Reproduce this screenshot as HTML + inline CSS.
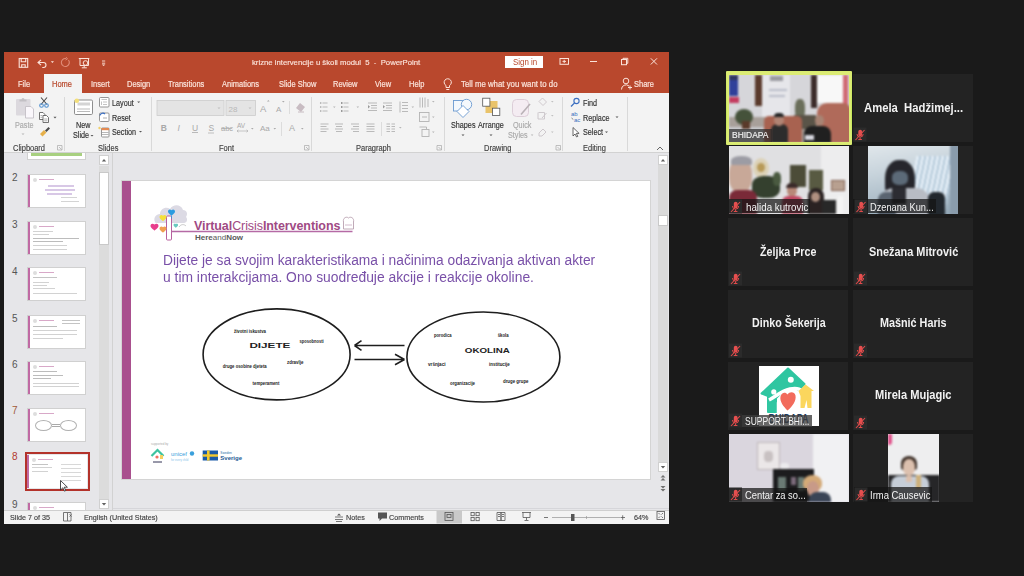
<!DOCTYPE html>
<html><head><meta charset="utf-8">
<style>
*{margin:0;padding:0;box-sizing:border-box}
html,body{width:1024px;height:576px;overflow:hidden;background:#1a1a1a;font-family:"Liberation Sans",sans-serif}
.a{position:absolute}
.t{position:absolute;white-space:nowrap;line-height:1;transform-origin:0 0}
.tab{position:absolute;white-space:nowrap;line-height:1;color:#fbe3da;font-size:8.5px;top:79.7px;transform:scaleX(.88);-webkit-text-stroke:0.2px #fbe3da;transform-origin:0 0}
.rb{position:absolute;white-space:nowrap;line-height:1;color:#303030;font-size:8.5px;transform:scaleX(.85);transform-origin:0 0;-webkit-text-stroke:0.15px currentColor}
.dis{color:#a9a9a9}
.grp{position:absolute;white-space:nowrap;line-height:1;color:#404040;font-size:8.5px;top:144px;transform:scaleX(.88);transform-origin:0 0;-webkit-text-stroke:0.15px #404040}
.sep{position:absolute;width:1px;background:#d9d9d9;top:97px;height:54px}
.st{position:absolute;white-space:nowrap;line-height:1;color:#404040;font-size:8px;top:514px;transform:scaleX(.9);transform-origin:0 0;-webkit-text-stroke:0.15px #404040}
.tile{position:absolute;width:120px;height:68px;background:#232323;overflow:hidden}
.nm{position:absolute;color:#f2f2f2;font-weight:bold;font-size:12px;white-space:nowrap;line-height:1;transform:scaleX(.91);transform-origin:0 0}
.ov{position:absolute;background:rgba(20,20,20,.72);height:14px}
.vn{position:absolute;color:#f4f4f4;font-size:10.5px;white-space:nowrap;line-height:1;transform-origin:0 0}
.mic{position:absolute;width:13px;height:14px;background:rgba(40,40,40,.9)}
svg{position:absolute;overflow:visible}
.th{position:absolute;left:27px;width:59px;height:34px;background:#fff;border:1px solid #d0d0d0;overflow:hidden}
.th:before{content:"";position:absolute;left:0;top:0;width:1.5px;height:100%;background:#c06aa4}
.tn{position:absolute;left:12px;font-size:10px;color:#555;line-height:1}
</style></head><body>
<!-- ===== PPT window ===== -->
<div class="a" style="left:4px;top:52px;width:665px;height:472px;background:#e6e6e9"></div>
<div class="a" style="left:113px;top:507.5px;width:556px;height:1px;background:#d6d6da"></div>
<div class="a" style="left:4px;top:52px;width:665px;height:41px;background:#b9482d"></div>
<div class="a" style="left:44px;top:74px;width:38px;height:19px;background:#f3f3f3"></div>
<div class="a" style="left:4px;top:93px;width:665px;height:60px;background:#f3f3f3;border-bottom:1px solid #d2d2d2"></div>
<div class="a" style="left:4px;top:510px;width:665px;height:14px;background:#f3f3f3;border-top:1px solid #cfcfcf"></div>

<!-- quick access icons -->
<svg style="left:0;top:0" width="1" height="1">
  <g fill="none" stroke="#fbe3da" stroke-width="1.1">
    <rect x="19.2" y="58.5" width="8.5" height="8.8"/>
    <path d="M21.2 58.5v3.2h4.5v-3.2M21.7 67.3v-2.6h3.5v2.6"/>
    <path d="M41 59.8l-3 2.7 3 2.7M38 62.5h5.5a2.5 2.5 0 0 1 0 5h-1.2"/>
  </g>
  <path d="M50.8 61.2h3.2l-1.6 1.8z" fill="#fbe3da"/>
  <path d="M68.5 60a4 4 0 1 1-2.5-1.5" fill="none" stroke="#e08c78" stroke-width="1.1"/>
  <path d="M66 57l1.5 2-2 1" fill="none" stroke="#e08c78" stroke-width="0.9"/>
  <g fill="none" stroke="#fbe3da" stroke-width="1">
    <path d="M78.8 58.5h10.5M80 58.5v7h8.5v-7M84.2 65.5v2M81.8 67.8h5"/>
    <circle cx="85.5" cy="63" r="2.3"/>
  </g>
  <path d="M102 61h3.2M102 63.2h3.2" stroke="#fbe3da" stroke-width="0.9"/>
  <path d="M101.8 64.5l1.8 1.6 1.8-1.6z" fill="#fbe3da"/>
</svg>
<!-- title text -->
<div class="t" id="ttl" style="left:252px;top:59px;font-size:8px;color:#fbe3da;transform:scaleX(.965);-webkit-text-stroke:0.15px #fbe3da">krizne intervencije u školi modul&nbsp; 5&nbsp; -&nbsp; PowerPoint</div>
<div class="a" style="left:505px;top:56px;width:38px;height:12px;background:#fff"></div>
<div class="t" id="signin" style="left:512.5px;top:58px;font-size:8.5px;color:#b8472a;transform:scaleX(.93)">Sign in</div>
<svg style="left:0;top:0" width="1" height="1">
  <g fill="none" stroke="#fbe3da" stroke-width="1">
    <rect x="560" y="58.5" width="8.5" height="5.8"/>
    <path d="M562.5 61.4h3.5M564.2 59.8v3.2"/>
    <path d="M590 61.5h7"/>
    <rect x="621.5" y="59.5" width="5" height="5.2"/>
    <path d="M623 59.5v-1.2h4.8v5H626.5"/>
    <path d="M650.8 58.3l6.2 6.2M657 58.3l-6.2 6.2"/>
  </g>
</svg>
<!-- tabs -->
<div class="tab" id="tFile" style="left:18px">File</div>
<div class="tab" id="tHome" style="left:52px;color:#b8472a;-webkit-text-stroke-color:#b8472a">Home</div>
<div class="tab" id="tIns" style="left:91px">Insert</div>
<div class="tab" id="tDes" style="left:127px">Design</div>
<div class="tab" id="tTra" style="left:168px">Transitions</div>
<div class="tab" id="tAni" style="left:222px">Animations</div>
<div class="tab" id="tSS" style="left:279px">Slide Show</div>
<div class="tab" id="tRev" style="left:333px">Review</div>
<div class="tab" id="tVie" style="left:375px">View</div>
<div class="tab" id="tHel" style="left:409px">Help</div>
<div class="tab" id="tTell" style="left:461px;transform:scaleX(.92)">Tell me what you want to do</div>
<div class="tab" id="tSha" style="left:634px">Share</div>
<svg style="left:0;top:0" width="1" height="1">
  <g fill="none" stroke="#fbe3da" stroke-width="1">
    <path d="M446 87.5v-2a3.6 3.6 0 1 1 3.5 0v2zM446.3 89.5h3"/>
    <circle cx="626" cy="81" r="2.8"/>
    <path d="M621.5 89.5a4.5 4.5 0 0 1 7.5-3.5M630 85.5v4M628 87.5h4"/>
  </g>
</svg>
<!-- ribbon group labels -->
<div class="grp" id="gClip" style="left:13px">Clipboard</div>
<div class="grp" id="gSli" style="left:98px">Slides</div>
<div class="grp" id="gFon" style="left:219px">Font</div>
<div class="grp" id="gPar" style="left:356px">Paragraph</div>
<div class="grp" id="gDra" style="left:484px">Drawing</div>
<div class="grp" id="gEdi" style="left:583px">Editing</div>
<div class="sep" style="left:64px"></div>
<div class="sep" style="left:151px"></div>
<div class="sep" style="left:311px"></div>
<div class="sep" style="left:444px"></div>
<div class="sep" style="left:562px"></div>
<div class="sep" style="left:627px"></div>
<!-- ribbon labels -->
<div class="rb dis" id="rPaste" style="left:15px;top:121px">Paste</div>
<div class="rb" id="rNew" style="left:76px;top:121px">New</div>
<div class="rb" id="rSlide" style="left:73px;top:131px">Slide</div>
<div class="rb" id="rLay" style="left:112px;top:99px">Layout</div>
<div class="rb" id="rRes" style="left:112px;top:114px">Reset</div>
<div class="rb" id="rSec" style="left:112px;top:128px">Section</div>
<div class="rb" id="rSha" style="left:451px;top:121px">Shapes</div>
<div class="rb" id="rArr" style="left:478px;top:121px">Arrange</div>
<div class="rb dis" id="rQui" style="left:513px;top:121px">Quick</div>
<div class="rb dis" id="rSty" style="left:508px;top:131px">Styles</div>
<div class="rb" id="rFin" style="left:583px;top:99px">Find</div>
<div class="rb" id="rRep" style="left:583px;top:114px">Replace</div>
<div class="rb" id="rSel" style="left:583px;top:128px">Select</div>
<svg style="left:0;top:0" width="1" height="1">
 <!-- Clipboard -->
 <rect x="16" y="99" width="14.5" height="16.5" rx="1" fill="#dcd9de"/>
 <path d="M19.5 101.5h7v-2h-2a1.5 1.5 0 0 0-3 0h-2z" fill="#c2c0c4"/>
 <path d="M25.5 106.5h5.5l2.5 2.5v9h-8z" fill="#faf7fb" stroke="#c4c0c6" stroke-width="0.9"/>
 <path d="M21.5 133.5h3l-1.5 1.6z" fill="#b5b5b5"/>
 <g stroke="#4a4a4a" stroke-width="1.1" fill="none"><path d="M41 97.5l6 7M47 97.5l-6 7"/></g>
 <g stroke="#4f8fd0" stroke-width="1.1" fill="none"><circle cx="41.5" cy="105.5" r="1.8"/><circle cx="46.5" cy="105.5" r="1.8"/></g>
 <g stroke="#505050" stroke-width="0.8" fill="#fff"><path d="M39.5 112.5h3.5l1.8 1.8v5.2h-5.3z"/><path d="M43 115.5h3.5l2 2v5h-5.5z"/></g><path d="M44.2 119h3.2M44.2 120.8h3.2M40.5 115.5h2M40.5 117.3h2" stroke="#808080" stroke-width="0.6"/>
 <path d="M53.5 116.8h3l-1.5 1.6z" fill="#555"/>
 <path d="M40 134l4-4 2.5 2.5-4 4z" fill="#e6b04a"/>
 <path d="M45 130.5l3.5-3.5 1.5 1.5-3.5 3.5z" fill="#4a4a4a"/>
 <!-- Slides -->
 <rect x="74.5" y="100" width="18" height="14.5" rx="1.2" fill="#fff" stroke="#8e8e8e" stroke-width="1"/>
 <rect x="77.5" y="102.5" width="12.5" height="3" fill="#d4d4d4"/>
 <path d="M77 109h13M77 111.5h13" stroke="#a9a9a9" stroke-width="0.8"/>
 <circle cx="76.8" cy="100.7" r="2.3" fill="#f3df7a"/>
 <path d="M90.5 135h3l-1.5 1.6z" fill="#555"/>
 <rect x="99.5" y="97.5" width="9.5" height="9.5" rx="1" fill="#fff" stroke="#8a8a8a" stroke-width="0.9"/>
 <path d="M101.5 99.5h5.5M101.5 101.5v3.5M103 102h4M103 104.5h4" stroke="#aaa" stroke-width="0.7"/>
 <path d="M137.2 101.5h3l-1.5 1.6z" fill="#555"/>
 <rect x="99.5" y="113" width="9.5" height="8.5" rx="1" fill="#fff" stroke="#8a8a8a" stroke-width="0.9"/>
 <path d="M100 115.5a3 3 0 0 1 5-1.5" stroke="#3a6fc4" stroke-width="1.1" fill="none"/>
 <path d="M103 118h4" stroke="#999" stroke-width="0.8"/>
 <rect x="101.5" y="128" width="7.5" height="9" rx="0.8" fill="#fff" stroke="#8a8a8a" stroke-width="0.9"/>
 <rect x="101.5" y="128" width="7.5" height="2.2" fill="#e48a52"/>
 <path d="M102 132.5h6.5M102 134.5h6.5" stroke="#999" stroke-width="0.7"/>
 <circle cx="99.5" cy="128" r="1.2" fill="#f1d06a"/>
 <path d="M139 131h3l-1.5 1.6z" fill="#555"/>
 <!-- launchers -->
 <g stroke="#a8a8a8" stroke-width="0.7" fill="none">
  <path d="M57.5 145.5h4.5v4.5h-4.5zM59 147l2.5 2.5"/>
  <path d="M304.5 145.5h4.5v4.5h-4.5zM306 147l2.5 2.5"/>
  <path d="M437 145.5h4.5v4.5H437zM438.5 147l2.5 2.5"/>
  <path d="M556 145.5h4.5v4.5H556zM557.5 147l2.5 2.5"/>
 </g>
 <path d="M657 150l3-3 3 3" stroke="#555" stroke-width="0.9" fill="none"/>
 <!-- Font group -->
 <rect x="157" y="100.5" width="67" height="15" fill="#e4e4e4" stroke="#cdcdcd" stroke-width="0.8"/>
 <rect x="226" y="100.5" width="29.5" height="15" fill="#e4e4e4" stroke="#cdcdcd" stroke-width="0.8"/>
 <path d="M217.5 107.5h3l-1.5 1.6zM248.5 107.5h3l-1.5 1.6z" fill="#bdbdbd"/>
 <text x="228.5" y="111.5" font-size="8" fill="#b9b9b9" font-family="Liberation Sans">28</text>
 <g fill="#a9a9a9" font-family="Liberation Sans">
  <text x="260" y="112" font-size="9.5">A</text><path d="M267 101.5l1.3-1.5 1.3 1.5z"/>
  <text x="276" y="112" font-size="8">A</text><path d="M282 101l1.3 1.5 1.3-1.5z"/>
 </g>
 <path d="M289.5 101v13" stroke="#d6d6d6" stroke-width="0.8"/>
 <path d="M296 108l4-5 5 4-4 5z" fill="#c8bcc2"/>
 <path d="M298 112h6" stroke="#c8bcc2" stroke-width="1"/>
 <g fill="#a9a9a9" font-family="Liberation Sans" font-size="8.5">
  <text x="160.8" y="131" font-weight="bold">B</text>
  <text x="177.5" y="131" font-style="italic">I</text>
  <text x="192" y="130.5">U</text><path d="M192 132.5h6" stroke="#a9a9a9" stroke-width="0.8"/>
  <text x="208.5" y="131">S</text><path d="M208 133h6" stroke="#a9a9a9" stroke-width="0.7"/>
  <text x="221" y="131" font-size="7.5">abc</text><path d="M221 128.5h11" stroke="#a9a9a9" stroke-width="0.7"/>
  <text x="237" y="128" font-size="6.5">AV</text><path d="M237 131h11M237 131l1.5-1.2M237 131l1.5 1.2M248 131l-1.5-1.2M248 131l-1.5 1.2" stroke="#a9a9a9" stroke-width="0.6"/>
  <text x="260" y="131" font-size="8">Aa</text>
  <text x="289" y="131" font-size="9">A</text>
  <path d="M251 128h2.6l-1.3 1.4zM273.5 128h2.6l-1.3 1.4zM301 128h2.6l-1.3 1.4z"/>
 </g>
 <path d="M281.5 122v14" stroke="#d6d6d6" stroke-width="0.8"/>
 <!-- Paragraph -->
 <g stroke="#b3b3b3" stroke-width="0.9" fill="none">
  <path d="M322.5 103h5M322.5 107h5M322.5 111h5M343.5 103h5M343.5 107h5M343.5 111h5"/>
  <path d="M368 103h9M371 105.5h6M371 108h6M368 110.5h9M383 103h9M386 105.5h6M386 108h6M383 110.5h9"/>
  <path d="M402 102.5h6M402 105.5h6M402 108.5h6M402 111.5h6M400 101.5v11"/>
  <path d="M420 97.5v10M422.5 97.5v10M425 97.5v10M428 99v8"/>
  <rect x="419.5" y="112.5" width="9.5" height="9"/><path d="M422 117h5"/>
  <rect x="422" y="129.5" width="7" height="7"/><path d="M419.5 127h7v2"/>
  <path d="M320.5 124h8M320.5 126.5h6M320.5 129h8M320.5 131.5h6"/>
  <path d="M335 124h8M336 126.5h6M335 129h8M336 131.5h6"/>
  <path d="M351 124h8M353 126.5h6M351 129h8M353 131.5h6"/>
  <path d="M366.5 124h8M366.5 126.5h8M366.5 129h8M366.5 131.5h8"/>
  <path d="M386.5 124h3.5M391.5 124h3.5M386.5 126.5h3.5M391.5 126.5h3.5M386.5 129h3.5M391.5 129h3.5M386.5 131.5h3.5M391.5 131.5h3.5"/>
 </g>
 <g fill="#9a9a9a">
  <circle cx="320.7" cy="103" r="0.8"/><circle cx="320.7" cy="107" r="0.8"/><circle cx="320.7" cy="111" r="0.8"/>
  <path d="M341 102h1.5v2H341zM341 106h1.5v2H341zM341 110h1.5v2H341z"/>
  <path d="M368 105l2 1.8-2 1.8z M383 105l2 1.8-2 1.8z"/>
 </g>
 <path d="M381.5 122v14" stroke="#d6d6d6" stroke-width="0.8"/>
 <g fill="#b5b5b5"><path d="M333 106.5h2.6l-1.3 1.4zM356.5 106.5h2.6l-1.3 1.4zM411.5 106.5h2.6l-1.3 1.4zM432 101h2.6l-1.3 1.4zM432 116.5h2.6l-1.3 1.4zM432 131.5h2.6l-1.3 1.4zM399 127h2.6l-1.3 1.4z"/></g>
 <!-- Drawing -->
 <rect x="453.5" y="100.5" width="10.5" height="10.5" fill="#f4f8fc" stroke="#6a9ad0" stroke-width="0.9"/>
 <circle cx="466.5" cy="104.5" r="5.2" fill="#f4f8fc" stroke="#6a9ad0" stroke-width="0.9"/>
 <path d="M463 105.5l6 6-6 6-6-6z" fill="#fff" stroke="#6a9ad0" stroke-width="0.9"/>
 <rect x="485.5" y="101" width="12" height="12" fill="#e9c36a"/>
 <rect x="482.7" y="98.2" width="7.2" height="8" fill="#fff" stroke="#555" stroke-width="0.8"/>
 <rect x="492.5" y="108.2" width="7.3" height="7.3" fill="#fff" stroke="#555" stroke-width="0.8"/>
 <path d="M461.5 134.5h3l-1.5 1.6zM489.5 134.5h3l-1.5 1.6z" fill="#555"/>
 <rect x="512.5" y="99.5" width="16" height="17" rx="4" fill="#f4ecf2" stroke="#d9cad5" stroke-width="0.9"/>
 <path d="M530 104l-9 10.5" stroke="#b9b1b6" stroke-width="1.6"/>
 <path d="M530.8 134.5h2.6l-1.3 1.4z" fill="#b5b5b5"/>
 <g stroke="#c9c4c8" stroke-width="0.9" fill="none">
  <path d="M539 101.5l3.5-3.5 4 4-3.5 3.5z"/>
  <path d="M538.5 112.5h6v6.5h-6.5v-6.5M542 118l4.5-5"/>
  <path d="M539 133l4-4 3 3-4 4h-3z"/>
 </g>
 <path d="M551 101h2.6l-1.3 1.4zM551 115h2.6l-1.3 1.4zM551 131.5h2.6l-1.3 1.4z" fill="#c0c0c0"/>
 <!-- Editing -->
 <circle cx="576.5" cy="101" r="2.6" fill="none" stroke="#3a6ec0" stroke-width="1.1"/>
 <path d="M574.6 102.9l-3.6 3.6" stroke="#3a6ec0" stroke-width="1.3"/>
 <text x="571" y="115.5" font-size="6" fill="#3a6ec0" font-family="Liberation Sans">ab</text>
 <text x="574" y="121.5" font-size="6" fill="#3a6ec0" font-family="Liberation Sans">ac</text>
 <path d="M571.5 118l1.8 1.5" stroke="#555" stroke-width="0.7"/>
 <path d="M615.5 116.5h3l-1.5 1.6z" fill="#555"/>
 <path d="M573 127.5v8.5l2-2 1.6 3 1.2-.6-1.5-3h2.8z" fill="#fff" stroke="#444" stroke-width="0.8"/>
 <path d="M605 131.5h3l-1.5 1.6z" fill="#555"/>
</svg>

<!-- ===== status bar ===== -->
<div class="st" id="sSl" style="left:10px">Slide 7 of 35</div>
<div class="st" id="sEn" style="left:84px">English (United States)</div>
<div class="st" id="sNo" style="left:346px">Notes</div>
<div class="st" id="sCo" style="left:389px">Comments</div>
<div class="st" id="sPc" style="left:634px">64%</div>
<svg style="left:0;top:0" width="1" height="1">
 <g stroke="#555" stroke-width="0.8" fill="none">
  <path d="M63.5 512.5h4v8.5h-4zM67.5 512.5h3.5v8.5h-3.5"/>
  <path d="M69.5 514.5l2 2M71.5 514.5l-2 2"/>
 </g>
 <g stroke="#555" stroke-width="0.8" fill="none"><path d="M335 517h8M335 519.5h8M336 521.5h6"/></g>
 <path d="M337 515.5l2-2 2 2z" fill="#555"/>
 <path d="M378 512.5h9v6h-5l-2.5 2.5v-2.5H378z" fill="#555"/>
 <rect x="436.5" y="510.5" width="25.5" height="13" fill="#c9c9c9"/>
 <g stroke="#555" stroke-width="0.8" fill="none">
  <rect x="445" y="512.5" width="8" height="8"/><rect x="447" y="514.5" width="4" height="3"/>
  <rect x="471" y="512.5" width="3.2" height="3.2"/><rect x="476" y="512.5" width="3.2" height="3.2"/>
  <rect x="471" y="517.5" width="3.2" height="3.2"/><rect x="476" y="517.5" width="3.2" height="3.2"/>
  <path d="M497 512.5h4v8h-4zM501 512.5h4v8h-4z"/>
  <path d="M498 514.5h2M498 516.5h2M502 514.5h2M502 516.5h2"/>
  <path d="M522 512.5h9M523 512.5v5h7v-5M526.5 517.5v2.5M524.5 520.5h4"/>
  <path d="M544 517.5h4M620.5 517.5h4.5M622.7 515.3v4.5"/>
  <rect x="657" y="511.5" width="7.5" height="8"/>
  <path d="M658.5 513l1.5 1.5M663 513l-1.5 1.5M658.5 518l1.5-1.5M663 518l-1.5-1.5"/>
 </g>
 <path d="M552 517.5h68" stroke="#a8a8a8" stroke-width="0.9"/>
 <rect x="571" y="514" width="3.5" height="7" fill="#555"/>
 <path d="M586.5 516v3" stroke="#999" stroke-width="0.7"/>
</svg>

<!-- thumbnail pane -->
<div class="a" style="left:112px;top:153px;width:1px;height:357px;background:#d2d2d2"></div>
<div class="a" style="left:99px;top:155px;width:10px;height:10px;background:#fff;border:1px solid #d0d0d0"></div>
<svg style="left:0;top:0" width="1" height="1"><path d="M101.8 161.5l2.2-2.4 2.2 2.4z" fill="#606060"/><path d="M101.8 503l2.2 2.4 2.2-2.4z" fill="#606060"/></svg>
<div class="a" style="left:99px;top:166px;width:10px;height:334px;background:#dcdcdc"></div>
<div class="a" style="left:99px;top:172px;width:10px;height:73px;background:#fff;border:1px solid #c9c9c9"></div>
<div class="a" style="left:99px;top:499px;width:10px;height:10px;background:#fff;border:1px solid #d0d0d0"></div>
<svg style="left:0;top:0" width="1" height="1"><path d="M101.8 503l2.2 2.4 2.2-2.4z" fill="#606060"/></svg>
<!-- thumb 1 bottom -->
<div class="a" style="left:27px;top:153px;width:59px;height:7px;background:#fff;border:1px solid #d0d0d0;border-top:none"></div>
<div class="a" style="left:31px;top:153px;width:51px;height:3px;background:#a8d080"></div>
<!-- thumbs -->
<div class="tn" style="top:173px">2</div>
<div class="th" style="top:174px">
 <div class="a" style="left:5px;top:3px;width:4px;height:4px;border-radius:50%;background:#ddd"></div>
 <div class="a" style="left:11px;top:4px;width:15px;height:1px;background:#d8a8c8"></div>
 <div class="a" style="left:20px;top:10px;width:26px;height:1.5px;background:#d8c8e6"></div>
 <div class="a" style="left:17px;top:14px;width:30px;height:1.5px;background:#d8c8e6"></div>
 <div class="a" style="left:19px;top:18px;width:25px;height:1.5px;background:#d8c8e6"></div>
 <div class="a" style="left:33px;top:22px;width:16px;height:1px;background:#d4d4d4"></div>
 <div class="a" style="left:33px;top:26px;width:18px;height:1px;background:#d4d4d4"></div>
</div>
<div class="tn" style="top:220px">3</div>
<div class="th" style="top:220.5px">
 <div class="a" style="left:5px;top:3px;width:4px;height:4px;border-radius:50%;background:#ddd"></div>
 <div class="a" style="left:11px;top:4px;width:15px;height:1px;background:#d8a8c8"></div>
 <div class="a" style="left:5px;top:9px;width:20px;height:1px;background:#d2d2d2"></div>
 <div class="a" style="left:5px;top:12px;width:16px;height:1px;background:#d2d2d2"></div>
 <div class="a" style="left:5px;top:16px;width:46px;height:1.2px;background:#bcbcbc"></div>
 <div class="a" style="left:5px;top:19px;width:30px;height:1.2px;background:#bcbcbc"></div>
 <div class="a" style="left:5px;top:23px;width:34px;height:1px;background:#d2d2d2"></div>
 <div class="a" style="left:5px;top:27px;width:34px;height:1px;background:#d2d2d2"></div>
</div>
<div class="tn" style="top:267px">4</div>
<div class="th" style="top:267px">
 <div class="a" style="left:5px;top:3px;width:4px;height:4px;border-radius:50%;background:#ddd"></div>
 <div class="a" style="left:11px;top:4px;width:15px;height:1px;background:#d8a8c8"></div>
 <div class="a" style="left:5px;top:9px;width:24px;height:1px;background:#c4c4c4"></div>
 <div class="a" style="left:5px;top:14px;width:16px;height:1px;background:#d2d2d2"></div>
 <div class="a" style="left:5px;top:17px;width:14px;height:1px;background:#d2d2d2"></div>
 <div class="a" style="left:5px;top:20px;width:22px;height:1px;background:#d2d2d2"></div>
 <div class="a" style="left:5px;top:25px;width:44px;height:1px;background:#d2d2d2"></div>
</div>
<div class="tn" style="top:314px">5</div>
<div class="th" style="top:314.5px">
 <div class="a" style="left:5px;top:3px;width:4px;height:4px;border-radius:50%;background:#ddd"></div>
 <div class="a" style="left:11px;top:4px;width:15px;height:1px;background:#d8a8c8"></div>
 <div class="a" style="left:34px;top:4px;width:18px;height:1px;background:#c4c4c4"></div>
 <div class="a" style="left:34px;top:7px;width:18px;height:1px;background:#c4c4c4"></div>
 <div class="a" style="left:5px;top:10px;width:24px;height:1px;background:#bcbcbc"></div>
 <div class="a" style="left:5px;top:14px;width:44px;height:1px;background:#d2d2d2"></div>
 <div class="a" style="left:5px;top:18px;width:44px;height:1px;background:#d2d2d2"></div>
 <div class="a" style="left:5px;top:22px;width:30px;height:1px;background:#d2d2d2"></div>
</div>
<div class="tn" style="top:360px">6</div>
<div class="th" style="top:361px">
 <div class="a" style="left:5px;top:3px;width:4px;height:4px;border-radius:50%;background:#ddd"></div>
 <div class="a" style="left:11px;top:4px;width:15px;height:1px;background:#d8a8c8"></div>
 <div class="a" style="left:5px;top:9px;width:24px;height:1px;background:#bcbcbc"></div>
 <div class="a" style="left:5px;top:13px;width:30px;height:1px;background:#bcbcbc"></div>
 <div class="a" style="left:5px;top:16px;width:18px;height:1px;background:#bcbcbc"></div>
 <div class="a" style="left:5px;top:21px;width:46px;height:1px;background:#d2d2d2"></div>
 <div class="a" style="left:5px;top:24px;width:46px;height:1px;background:#d2d2d2"></div>
</div>
<div class="tn" style="top:406px;color:#a05a3a">7</div>
<div class="th" style="top:407.5px">
 <div class="a" style="left:5px;top:3px;width:4px;height:4px;border-radius:50%;background:#ddd"></div>
 <div class="a" style="left:11px;top:4px;width:15px;height:1px;background:#d8a8c8"></div>
 <div class="a" style="left:7px;top:11px;width:17px;height:11px;border-radius:50%;border:1px solid #b0b0b0"></div>
 <div class="a" style="left:32px;top:11px;width:17px;height:11px;border-radius:50%;border:1px solid #b0b0b0"></div>
 <div class="a" style="left:24px;top:15px;width:8px;height:1px;background:#aaa"></div>
 <div class="a" style="left:24px;top:17px;width:8px;height:1px;background:#aaa"></div>
</div>
<div class="tn" style="top:452px;color:#b23a2e">8</div>
<div class="a" style="left:24.5px;top:452px;width:65px;height:38.5px;border:2.5px solid #b3322a"></div>
<div class="th" style="top:454.5px;left:27px;width:60px;height:33.5px;border:none">
 <div class="a" style="left:5px;top:3px;width:4px;height:4px;border-radius:50%;background:#ddd"></div>
 <div class="a" style="left:11px;top:4px;width:15px;height:1px;background:#d8a8c8"></div>
 <div class="a" style="left:5px;top:9px;width:16px;height:1px;background:#c4c4c4"></div>
 <div class="a" style="left:5px;top:12px;width:20px;height:1px;background:#d2d2d2"></div>
 <div class="a" style="left:5px;top:16px;width:16px;height:1px;background:#d2d2d2"></div>
 <div class="a" style="left:34px;top:9px;width:20px;height:1px;background:#d8d8d8"></div>
 <div class="a" style="left:34px;top:13px;width:20px;height:1px;background:#d8d8d8"></div>
 <div class="a" style="left:34px;top:17px;width:20px;height:1px;background:#d8d8d8"></div>
 <div class="a" style="left:34px;top:21px;width:20px;height:1px;background:#d8d8d8"></div>
 <div class="a" style="left:34px;top:25px;width:20px;height:1px;background:#d8d8d8"></div>
</div>
<svg style="left:0;top:0" width="1" height="1"><path d="M60.5 480.5v9.5l2.3-2.2 1.7 3.4 1.3-.7-1.6-3.3h3.2z" fill="#fff" stroke="#222" stroke-width="0.8"/></svg>
<div class="tn" style="top:500px">9</div>
<div class="th" style="top:501.5px;height:8.5px;border-bottom:none">
 <div class="a" style="left:5px;top:3px;width:4px;height:4px;border-radius:50%;background:#ddd"></div>
 <div class="a" style="left:11px;top:4px;width:15px;height:1px;background:#d8a8c8"></div>
</div>
<!-- right scrollbar -->
<div class="a" style="left:658px;top:155px;width:10px;height:316px;background:#dadada"></div>
<div class="a" style="left:658px;top:155px;width:10px;height:10px;background:#fff;border:1px solid #d0d0d0"></div>
<div class="a" style="left:658px;top:215px;width:10px;height:11px;background:#fff;border:1px solid #c9c9c9"></div>
<div class="a" style="left:658px;top:462px;width:10px;height:10px;background:#fff;border:1px solid #d0d0d0"></div>
<svg style="left:0;top:0" width="1" height="1">
 <path d="M660.8 161.5l2.2-2.4 2.2 2.4zM660.8 466l2.2 2.4 2.2-2.4z" fill="#606060"/>
 <path d="M660.5 477.5l2.5-2.5 2.5 2.5zM660.5 480.5l2.5-2.5 2.5 2.5zM660.5 486l2.5 2.5 2.5-2.5zM660.5 489l2.5 2.5 2.5-2.5z" fill="#707070"/>
</svg>
<!-- slide -->
<div class="a" style="left:122px;top:181px;width:528px;height:298px;background:#fff;box-shadow:0 0 0 1px #d4d4d4"></div>
<div class="a" style="left:122px;top:181px;width:8.5px;height:298px;background:#a9508e"></div>

<!-- slide content -->
<svg style="left:0;top:0" width="1" height="1">
 <!-- cloud -->
 <path d="M155 222c-2-4 1-8 5-8 0-5 6-8 10-5 3-5 11-5 13 1 4 0 5 4 3 7 2 2 1 6-2 6h-27c-2 0-3-1-2-1z" fill="#dcdae4"/>
 <rect x="166.5" y="216" width="5" height="24" rx="1" fill="#fff" stroke="#b7609e" stroke-width="1"/>
 <path d="M150.5 226c0-2 2-3 4-1.5 2-1.5 4-.5 4 1.5 0 2-4 4.5-4 4.5s-4-2.5-4-4.5z" fill="#e83e8c"/>
 <path d="M159.5 217c0-1.8 2-2.6 3.5-1.3 1.5-1.3 3.5-.5 3.5 1.3 0 1.8-3.5 4-3.5 4s-3.5-2.2-3.5-4z" fill="#f5e03a"/>
 <path d="M168 211.5c0-1.8 2-2.6 3.5-1.3 1.5-1.3 3.5-.5 3.5 1.3 0 1.8-3.5 4.2-3.5 4.2s-3.5-2.4-3.5-4.2z" fill="#2a9be0"/>
 <path d="M171.5 215.5v3" stroke="#2a9be0" stroke-width="0.8"/>
 <path d="M159.5 228.5c0-1.8 2-2.6 3.5-1.3 1.5-1.3 3.5-.5 3.5 1.3 0 1.8-3.5 4-3.5 4s-3.5-2.2-3.5-4z" fill="#f0a050"/>
 <path d="M173.5 225c0-1.2 1.3-1.7 2.3-.9 1-.8 2.3-.3 2.3.9 0 1.2-2.3 2.7-2.3 2.7s-2.3-1.5-2.3-2.7z" fill="#6ac8c0"/>
 <path d="M179 227c2-3 5-3 7-1" stroke="#bbb" stroke-width="0.8" fill="none"/>
 <path d="M171.5 231.5h181" stroke="#b56aa5" stroke-width="1.3"/>
 <!-- cake icon -->
 <path d="M343.5 222c-1-4 3-6 5-4 2-2 6 0 5 4v7h-10z" fill="#fff" stroke="#b9a0b0" stroke-width="0.9"/>
 <path d="M345 225h7" stroke="#c8a8c0" stroke-width="0.8"/>
</svg>
<div class="t" id="vci" style="left:194px;top:220px;font-size:12.5px;color:#a04a84;letter-spacing:-0.08px"><b>Virtual</b>Crisis<b>Interventions</b></div>
<div class="t" id="han" style="left:195px;top:233.5px;font-size:8px;color:#5a5a5a"><b>Here</b>and<b>Now</b></div>
<div class="t" id="l1" style="left:163px;top:253.3px;font-size:14px;color:#7950a8;transform:scaleX(.983)">Dijete je sa svojim karakteristikama i načinima odazivanja aktivan akter</div>
<div class="t" id="l2" style="left:163px;top:269.6px;font-size:14px;color:#7950a8;transform:scaleX(.989)">u tim interakcijama. Ono suodređuje akcije i reakcije okoline.</div>
<svg style="left:0;top:0" width="1" height="1">
 <ellipse cx="276.6" cy="354.4" rx="73.5" ry="45.5" fill="none" stroke="#1e1e1e" stroke-width="1.6"/>
 <ellipse cx="483.4" cy="357" rx="76.5" ry="45" fill="none" stroke="#1e1e1e" stroke-width="1.6"/>
 <g stroke="#1e1e1e" stroke-width="1.6" fill="none">
  <path d="M354.5 345.5h50M354.5 345.5l7-4.8M354.5 345.5l7 4.8"/>
  <path d="M354.5 359.5h50M404.5 359.5l-9.5-5.2M404.5 359.5l-9.5 5.2"/>
 </g>
 <g font-family="Liberation Sans" fill="#222" font-size="4.8" font-weight="bold">
  <text x="234" y="333" textLength="32" lengthAdjust="spacingAndGlyphs">životni iskustva</text>
  <text x="299.6" y="343.2" textLength="24" lengthAdjust="spacingAndGlyphs">sposobnosti</text>
  <text x="222.7" y="367.5" textLength="44" lengthAdjust="spacingAndGlyphs">druge osobine djeteta</text>
  <text x="287" y="364.2" textLength="16.4" lengthAdjust="spacingAndGlyphs">zdravlje</text>
  <text x="252.6" y="385" textLength="26.8" lengthAdjust="spacingAndGlyphs">temperament</text>
  <text x="249.4" y="348.3" font-size="8" font-weight="bold" textLength="41" lengthAdjust="spacingAndGlyphs">DIJETE</text>
  <text x="434" y="336.6" textLength="17.6" lengthAdjust="spacingAndGlyphs">porodica</text>
  <text x="497.7" y="336.6" textLength="11" lengthAdjust="spacingAndGlyphs">škola</text>
  <text x="464.8" y="353.3" font-size="8" font-weight="bold" textLength="45" lengthAdjust="spacingAndGlyphs">OKOLINA</text>
  <text x="428" y="365.6" textLength="17.6" lengthAdjust="spacingAndGlyphs">vršnjaci</text>
  <text x="489" y="366.4" textLength="20.8" lengthAdjust="spacingAndGlyphs">institucije</text>
  <text x="450" y="385.1" textLength="25" lengthAdjust="spacingAndGlyphs">organizacije</text>
  <text x="503" y="383.3" textLength="25.5" lengthAdjust="spacingAndGlyphs">druge grupe</text>
 </g>
 <!-- bottom logos -->
 <text x="151" y="445" font-size="3" fill="#aaa" font-family="Liberation Sans">supported by</text>
 <path d="M151.5 456l6-6 6 6" stroke="#3ec3a0" stroke-width="2.2" fill="none"/>
 <path d="M154 456h7v6h-7z" fill="#fff"/>
 <circle cx="157" cy="457" r="1.6" fill="#f07060"/>
 <path d="M160 455h3v4h-3z" fill="#f6d060"/>
 <path d="M153 462h9" stroke="#335" stroke-width="1"/>
 <text x="171" y="455.5" font-size="6" fill="#3aa0dc" font-family="Liberation Sans">unicef</text>
 <circle cx="192" cy="453.5" r="2.2" fill="#3aa0dc"/>
 <text x="171" y="461" font-size="2.8" fill="#8cc4ea" font-family="Liberation Sans">for every child</text>
 <rect x="202.7" y="450.5" width="15.3" height="10" fill="#1a5aa8"/>
 <rect x="207" y="450.5" width="2.6" height="10" fill="#f2c82e"/>
 <rect x="202.7" y="454.3" width="15.3" height="2.4" fill="#f2c82e"/>
 <text x="220.3" y="453.5" font-size="3.2" fill="#2a70a8" font-family="Liberation Sans">Sweden</text>
 <text x="220.3" y="459.5" font-size="6" fill="#1e5a94" font-family="Liberation Sans" font-weight="bold">Sverige</text>
</svg>

<!-- ===== zoom tiles ===== -->
<div class="tile" style="left:853px;top:74px"></div>
<div class="tile" style="left:853px;top:146px"></div>
<div class="tile" style="left:728px;top:218px"></div>
<div class="tile" style="left:853px;top:218px"></div>
<div class="tile" style="left:728px;top:290px"></div>
<div class="tile" style="left:853px;top:290px"></div>
<div class="tile" style="left:728px;top:362px"></div>
<div class="tile" style="left:853px;top:362px"></div>
<div class="tile" style="left:853px;top:434px"></div>
<!-- BHIDAPA (active) -->
<div class="a" style="left:725.5px;top:71px;width:126px;height:74px;background:linear-gradient(180deg,#d8ec70 0%,#c4e85a 60%,#d8ec70 100%);border-radius:1px"></div>
<div class="a" style="left:726.5px;top:72px;width:124px;height:72px;background:#dcec74"></div>
<div class="a" style="left:729px;top:74.5px;width:119.5px;height:67px;overflow:hidden;background:#d4d4d8">
 <div style="filter:blur(1px);position:absolute;left:0;top:0;width:120px;height:68px">
  <div class="a" style="left:0;top:0;width:120px;height:42px;background:#d6d6da"></div>
  <div class="a" style="left:0;top:0;width:9px;height:21px;background:#30409a"></div>
  <div class="a" style="left:0;top:0;width:9px;height:5px;background:#303660"></div>
  <div class="a" style="left:0;top:22.5px;width:10px;height:6px;background:#c43c60"></div>
  <div class="a" style="left:26px;top:0;width:7px;height:31px;background:#5a3a2c"></div>
  <div class="a" style="left:33px;top:0;width:28px;height:42px;background:#e6e6ea"></div>
  <div class="a" style="left:41px;top:1.5px;width:13px;height:4.5px;background:#9a9aa0"></div>
  <div class="a" style="left:40px;top:14px;width:18px;height:2px;background:#b8bcc8"></div>
  <div class="a" style="left:40px;top:20px;width:16px;height:2px;background:#b8bcc8"></div>
  <div class="a" style="left:82px;top:0;width:6px;height:33px;background:#3c2c2a"></div>
  <div class="a" style="left:88px;top:0;width:27px;height:28px;background:#f8f8f8"></div>
  <div class="a" style="left:114px;top:0;width:5px;height:32px;background:#d06a74"></div>
  <div class="a" style="left:0;top:42px;width:120px;height:26px;background:#a8a09a"></div>
  <div class="a" style="left:0;top:52px;width:36px;height:16px;background:#c8c8cc"></div>
  <div class="a" style="left:6px;top:34px;width:18px;height:16px;border-radius:50%;background:#45523a"></div>
  <div class="a" style="left:13px;top:46px;width:8px;height:8px;background:#5a3a2a"></div>
  <div class="a" style="left:66px;top:24px;width:10px;height:20px;border-radius:40%;background:#6a6e5a"></div>
  <div class="a" style="left:65px;top:40px;width:22px;height:14px;background:#5a5448"></div>
  <div class="a" style="left:35px;top:41px;width:38px;height:27px;background:#a86250;border-radius:5px 5px 0 0"></div>
  <div class="a" style="left:88px;top:28px;width:34px;height:40px;background:#b06a5a;border-radius:10px 8px 0 0"></div>
  <div class="a" style="left:42px;top:49px;width:17px;height:19px;background:#2c2c2c;border-radius:6px 6px 0 0"></div>
  <div class="a" style="left:45px;top:39px;width:10px;height:12px;background:#b08474;border-radius:50%"></div>
  <div class="a" style="left:45px;top:38px;width:10px;height:4px;background:#222;border-radius:5px 5px 0 0"></div>
  <div class="a" style="left:75px;top:51px;width:27px;height:17px;background:#202020;border-radius:8px 8px 0 0"></div>
  <div class="a" style="left:86px;top:40px;width:9px;height:11px;background:#a88474;border-radius:50%"></div>
  <div class="a" style="left:76px;top:60px;width:9px;height:5px;background:#d8d8e0"></div>
 </div>
 <div class="ov" style="left:0;top:54.5px;width:43px;height:13px;background:rgba(40,40,40,.7)"></div>
 <div class="vn" style="left:2.6px;top:55px;font-size:9.6px;transform:scaleX(.88);-webkit-text-stroke:0.15px #f4f4f4">BHIDAPA</div>
</div>
<!-- halida -->
<div class="a" style="left:728.5px;top:146px;width:120px;height:68px;overflow:hidden;background:#e9e9eb">
 <div style="filter:blur(0.9px);position:absolute;left:0;top:0;width:120px;height:68px">
  <div class="a" style="left:0;top:0;width:92px;height:68px;background:#e0e0e2"></div>
  <div class="a" style="left:92px;top:0;width:28px;height:68px;background:#ededee"></div>
  <div class="a" style="left:24px;top:12px;width:16px;height:20px;border-radius:50%;background:#dcd2b8"></div>
  <div class="a" style="left:28px;top:17px;width:8px;height:9px;border-radius:50%;background:#b89a58"></div>
  <div class="a" style="left:23px;top:30px;width:28px;height:22px;border-radius:40%;background:#34402e"></div>
  <div class="a" style="left:44px;top:26px;width:8px;height:14px;border-radius:40%;background:#4a5a40"></div>
  <div class="a" style="left:61px;top:19px;width:16px;height:22px;background:#4c4c38"></div>
  <div class="a" style="left:80px;top:24px;width:14px;height:20px;background:#585a42"></div>
  <div class="a" style="left:102px;top:34px;width:14px;height:11px;background:#b8a090;border:1px solid #806050"></div>
  <div class="a" style="left:0;top:13px;width:23px;height:33px;border-radius:45% 45% 40% 40%;background:#c8a898"></div>
  <div class="a" style="left:2px;top:10px;width:21px;height:9px;border-radius:50% 50% 10% 10%;background:#9c9ca4"></div>
  <div class="a" style="left:0;top:44px;width:28px;height:24px;background:#7a2a38;border-radius:8px 8px 0 0"></div>
  <div class="a" style="left:58px;top:38px;width:10px;height:13px;border-radius:50%;background:#b88878"></div>
  <div class="a" style="left:57px;top:37px;width:12px;height:5px;border-radius:6px 6px 0 0;background:#3a2a2a"></div>
  <div class="a" style="left:53px;top:50px;width:21px;height:18px;background:#c04862;border-radius:6px 6px 0 0"></div>
  <div class="a" style="left:79px;top:42px;width:16px;height:26px;border-radius:8px 8px 0 0;background:#2a2222"></div>
  <div class="a" style="left:82px;top:46px;width:9px;height:10px;border-radius:50%;background:#b09080"></div>
  <div class="a" style="left:93px;top:54px;width:14px;height:14px;background:#282828"></div>
  <div class="a" style="left:109px;top:50px;width:5px;height:18px;background:#f4f4f4"></div>
 </div>
 <div class="ov" style="left:0;top:53.3px;width:81px;height:14px"></div>
</div>
<!-- dzenana -->
<div class="a" style="left:868px;top:146px;width:90px;height:68px;overflow:hidden;background:#a8b8c6">
 <div style="filter:blur(1.2px);position:absolute;left:-2px;top:-2px;width:94px;height:72px">
  <div class="a" style="left:0;top:0;width:94px;height:72px;background:linear-gradient(170deg,#e2e8ec 0%,#c8d4dc 35%,#8ea4b4 100%)"></div>
  <div class="a" style="left:44px;top:12px;width:40px;height:60px;background:repeating-linear-gradient(90deg,#e4eef6 0 3px,#b0c6d8 3px 5px);transform:skewX(-12deg)"></div>
  <div class="a" style="left:84px;top:0;width:10px;height:72px;background:#8a9cac"></div>
  <div class="a" style="left:19px;top:16px;width:30px;height:40px;border-radius:45% 45% 35% 35%;background:#26262c"></div>
  <div class="a" style="left:26px;top:27px;width:16px;height:14px;border-radius:40%;background:#5c6a78"></div>
  <div class="a" style="left:14px;top:44px;width:50px;height:28px;border-radius:14px 14px 0 0;background:#b8bcc4"></div>
  <div class="a" style="left:12px;top:48px;width:18px;height:24px;border-radius:8px 0 0 0;background:#5a6470"></div>
  <div class="a" style="left:26px;top:44px;width:14px;height:16px;background:#2c2c32"></div>
  <div class="a" style="left:62px;top:48px;width:17px;height:24px;border-radius:6px 6px 0 0;background:#22282e"></div>
 </div>
</div>
<div class="ov" style="left:852.7px;top:199.3px;width:83px;height:14px"></div>
<!-- support bh -->
<div class="a" style="left:759px;top:366px;width:60px;height:60px;background:#fff;overflow:hidden">
 <svg style="left:0;top:0" width="60" height="60" viewBox="0 0 60 60">
  <path d="M2.5 27.5L29 2.5l16.5 15.5L40 24 36 22c-6 0-14 4-19 10l0 14h-8V30z" fill="#2fc6a1" stroke="#2fc6a1" stroke-width="2" stroke-linejoin="round"/>
  <circle cx="31.8" cy="13.8" r="3" fill="#fff"/>
  <circle cx="14.8" cy="25.9" r="2.6" fill="#fff"/>
  <path d="M10 34c6-3 12-9 21-11 5-1 10 0 12 2" stroke="#fff" stroke-width="3.5" fill="none"/>
  <path d="M19 46V37l4-2" stroke="#fff" stroke-width="2.5" fill="none"/>
  <path d="M28.5 44.5c-4-4-8-9-7-14 1-4 5-5 7-2 2-3 7-3 8 1 1 5-3 11-8 15z" fill="#f26b5c"/>
  <path d="M39.5 25l7-6.5 8.5 6.5h-2.5v17h-4l-1-8-2 8h-4V30z" fill="#fbd65d"/>
  <text x="9.5" y="57" font-size="12" font-weight="bold" fill="#1f3b5f" font-family="Liberation Sans" textLength="40" lengthAdjust="spacingAndGlyphs">BHIDAPA</text>
 </svg>
</div>
<div class="ov" style="left:729px;top:415px;width:83px;height:12px;background:rgba(60,60,60,.78)"></div>
<!-- centar -->
<div class="a" style="left:728.5px;top:434px;width:120px;height:68px;overflow:hidden;background:#dcd9e0">
 <div style="filter:blur(0.8px);position:absolute;left:0;top:0;width:120px;height:68px">
  <div class="a" style="left:0;top:0;width:84px;height:68px;background:#dad6de"></div>
  <div class="a" style="left:84px;top:0;width:36px;height:68px;background:#f1f1f3"></div>
  <div class="a" style="left:28px;top:8px;width:23px;height:28px;background:#ebe7e8;border:1px solid #bdb6b8"></div>
  <div class="a" style="left:35px;top:17px;width:9px;height:11px;border-radius:40%;background:#b0a8a8;opacity:.6"></div>
  <div class="a" style="left:51px;top:29px;width:9px;height:6px;background:#ecebee;border-radius:3px"></div>
  <div class="a" style="left:44px;top:35px;width:41px;height:33px;background:#1c1c1e"></div>
  <div class="a" style="left:49.5px;top:43px;width:8px;height:14px;background:#6a7a74"></div>
  <div class="a" style="left:62px;top:43px;width:5px;height:8px;background:#7a6a7a"></div>
  <div class="a" style="left:69px;top:43px;width:6px;height:14px;background:#6a7a74"></div>
  <div class="a" style="left:74px;top:41px;width:19px;height:16px;border-radius:50% 50% 40% 40%;background:#d4aa78"></div>
  <div class="a" style="left:78px;top:47px;width:12px;height:16px;border-radius:50%;background:#c89a88"></div>
  <div class="a" style="left:80px;top:58px;width:22px;height:10px;border-radius:8px 8px 0 0;background:#3a4456"></div>
 </div>
 <div class="ov" style="left:0;top:53.5px;width:78px;height:14.5px"></div>
</div>
<!-- irma -->
<div class="a" style="left:887.5px;top:434px;width:51.5px;height:67.5px;overflow:hidden;background:#eaeaec">
 <div style="filter:blur(0.8px);position:absolute;left:0;top:0;width:52px;height:68px">
  <div class="a" style="left:0;top:0;width:52px;height:42px;background:#eeeeef"></div>
  <div class="a" style="left:0;top:41px;width:52px;height:27px;background:#262628"></div>
  <div class="a" style="left:0;top:0;width:4.5px;height:11px;background:#e0508a;border-radius:0 0 3px 0"></div>
  <div class="a" style="left:13px;top:22px;width:16px;height:14px;border-radius:50% 50% 20% 20%;background:#3e3028"></div>
  <div class="a" style="left:15px;top:25px;width:12.5px;height:17px;border-radius:45%;background:#dcc0ae"></div>
  <div class="a" style="left:3px;top:42px;width:38px;height:26px;border-radius:8px 8px 0 0;background:#c6ced8"></div>
  <div class="a" style="left:18px;top:42px;width:6px;height:6px;background:#dcc0ae"></div>
  <div class="a" style="left:28px;top:41px;width:5px;height:14px;background:#cdb07a"></div>
 </div>
</div>
<div class="ov" style="left:854px;top:487px;width:78px;height:14.5px"></div>
<!-- names on tiles -->
<div class="nm" id="nAm" style="left:864px;top:101.5px;transform:scaleX(.94)">Amela&nbsp; Hadžimej...</div>
<div class="nm" id="nZe" style="left:760px;top:246px;transform:scaleX(.89)">Željka Prce</div>
<div class="nm" id="nSn" style="left:869px;top:246px;transform:scaleX(.91)">Snežana Mitrović</div>
<div class="nm" id="nDi" style="left:752px;top:316.6px;transform:scaleX(.89)">Dinko Šekerija</div>
<div class="nm" id="nMa" style="left:880px;top:316.6px;transform:scaleX(.9)">Mašnić Haris</div>
<div class="nm" id="nMi" style="left:875px;top:389.3px;transform:scaleX(.925)">Mirela Mujagic</div>
<div class="vn" id="vHa" style="left:746px;top:201.6px;transform:scaleX(.93)">halida kutrovic</div>
<div class="vn" id="vDz" style="left:869.5px;top:201.6px;transform:scaleX(.88)">Dzenana Kun...</div>
<div class="vn" id="vSu" style="left:745px;top:416px;transform:scaleX(.81)">SUPPORT BHI...</div>
<div class="vn" id="vCe" style="left:745px;top:490px;transform:scaleX(.89)">Centar za so...</div>
<div class="vn" id="vIr" style="left:869.5px;top:490px;transform:scaleX(.9)">Irma Causevic</div>
<!-- mic icons -->
<svg style="left:0;top:0" width="1" height="1">
 
 
 <g transform="translate(853.5 127.5)"><rect x="0" y="0" width="13" height="14" fill="#2b2b2b"/>
   <rect x="4.8" y="2.3" width="3.8" height="6.5" rx="1.9" fill="#e65050"/>
   <path d="M3.5 6.5a3.1 3.1 0 0 0 6.2 0M6.6 9.8v2.2M4.8 12h3.6" stroke="#e04a4a" stroke-width="1" fill="none"/>
   <path d="M2 12.5l9-10" stroke="#e04a4a" stroke-width="1.1"/></g>
 <g transform="translate(729 199.5)"><rect x="0" y="0" width="13" height="14" fill="#2b2b2b"/>
   <rect x="4.8" y="2.3" width="3.8" height="6.5" rx="1.9" fill="#e65050"/>
   <path d="M3.5 6.5a3.1 3.1 0 0 0 6.2 0M6.6 9.8v2.2M4.8 12h3.6" stroke="#e04a4a" stroke-width="1" fill="none"/>
   <path d="M2 12.5l9-10" stroke="#e04a4a" stroke-width="1.1"/></g>
 <g transform="translate(854.5 199.5)"><rect x="0" y="0" width="13" height="14" fill="#2b2b2b"/>
   <rect x="4.8" y="2.3" width="3.8" height="6.5" rx="1.9" fill="#e65050"/>
   <path d="M3.5 6.5a3.1 3.1 0 0 0 6.2 0M6.6 9.8v2.2M4.8 12h3.6" stroke="#e04a4a" stroke-width="1" fill="none"/>
   <path d="M2 12.5l9-10" stroke="#e04a4a" stroke-width="1.1"/></g>
 <g transform="translate(729 271.5)"><rect x="0" y="0" width="13" height="14" fill="#2b2b2b"/>
   <rect x="4.8" y="2.3" width="3.8" height="6.5" rx="1.9" fill="#e65050"/>
   <path d="M3.5 6.5a3.1 3.1 0 0 0 6.2 0M6.6 9.8v2.2M4.8 12h3.6" stroke="#e04a4a" stroke-width="1" fill="none"/>
   <path d="M2 12.5l9-10" stroke="#e04a4a" stroke-width="1.1"/></g>
 <g transform="translate(854 271.5)"><rect x="0" y="0" width="13" height="14" fill="#2b2b2b"/>
   <rect x="4.8" y="2.3" width="3.8" height="6.5" rx="1.9" fill="#e65050"/>
   <path d="M3.5 6.5a3.1 3.1 0 0 0 6.2 0M6.6 9.8v2.2M4.8 12h3.6" stroke="#e04a4a" stroke-width="1" fill="none"/>
   <path d="M2 12.5l9-10" stroke="#e04a4a" stroke-width="1.1"/></g>
 <g transform="translate(729 343.5)"><rect x="0" y="0" width="13" height="14" fill="#2b2b2b"/>
   <rect x="4.8" y="2.3" width="3.8" height="6.5" rx="1.9" fill="#e65050"/>
   <path d="M3.5 6.5a3.1 3.1 0 0 0 6.2 0M6.6 9.8v2.2M4.8 12h3.6" stroke="#e04a4a" stroke-width="1" fill="none"/>
   <path d="M2 12.5l9-10" stroke="#e04a4a" stroke-width="1.1"/></g>
 <g transform="translate(854 343.5)"><rect x="0" y="0" width="13" height="14" fill="#2b2b2b"/>
   <rect x="4.8" y="2.3" width="3.8" height="6.5" rx="1.9" fill="#e65050"/>
   <path d="M3.5 6.5a3.1 3.1 0 0 0 6.2 0M6.6 9.8v2.2M4.8 12h3.6" stroke="#e04a4a" stroke-width="1" fill="none"/>
   <path d="M2 12.5l9-10" stroke="#e04a4a" stroke-width="1.1"/></g>
 <g transform="translate(729 413.5)"><rect x="0" y="0" width="13" height="14" fill="#2b2b2b"/>
   <rect x="4.8" y="2.3" width="3.8" height="6.5" rx="1.9" fill="#e65050"/>
   <path d="M3.5 6.5a3.1 3.1 0 0 0 6.2 0M6.6 9.8v2.2M4.8 12h3.6" stroke="#e04a4a" stroke-width="1" fill="none"/>
   <path d="M2 12.5l9-10" stroke="#e04a4a" stroke-width="1.1"/></g>
 <g transform="translate(854 415.5)"><rect x="0" y="0" width="13" height="14" fill="#2b2b2b"/>
   <rect x="4.8" y="2.3" width="3.8" height="6.5" rx="1.9" fill="#e65050"/>
   <path d="M3.5 6.5a3.1 3.1 0 0 0 6.2 0M6.6 9.8v2.2M4.8 12h3.6" stroke="#e04a4a" stroke-width="1" fill="none"/>
   <path d="M2 12.5l9-10" stroke="#e04a4a" stroke-width="1.1"/></g>
 <g transform="translate(729 487.5)"><rect x="0" y="0" width="13" height="14" fill="#2b2b2b"/>
   <rect x="4.8" y="2.3" width="3.8" height="6.5" rx="1.9" fill="#e65050"/>
   <path d="M3.5 6.5a3.1 3.1 0 0 0 6.2 0M6.6 9.8v2.2M4.8 12h3.6" stroke="#e04a4a" stroke-width="1" fill="none"/>
   <path d="M2 12.5l9-10" stroke="#e04a4a" stroke-width="1.1"/></g>
 <g transform="translate(854.5 487.5)"><rect x="0" y="0" width="13" height="14" fill="#2b2b2b"/>
   <rect x="4.8" y="2.3" width="3.8" height="6.5" rx="1.9" fill="#e65050"/>
   <path d="M3.5 6.5a3.1 3.1 0 0 0 6.2 0M6.6 9.8v2.2M4.8 12h3.6" stroke="#e04a4a" stroke-width="1" fill="none"/>
   <path d="M2 12.5l9-10" stroke="#e04a4a" stroke-width="1.1"/></g>
</svg>

</body></html>
